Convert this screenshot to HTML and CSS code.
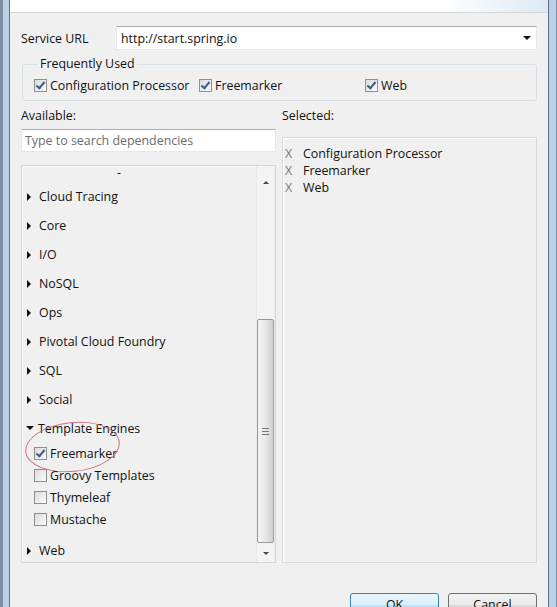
FILE: index.html
```html
<!DOCTYPE html>
<html lang="en">
<head>
  <meta charset="UTF-8" />
  <title>New Spring Starter Project Dependencies</title>
  <link rel="stylesheet" href="styles.css">
</head>
<body>
  <div class="window">
    <div class="banner"></div>
    <div class="content">

      <div class="url-row">
        <label class="url-label">Service URL</label>
        <div class="combo">
          <span>http://start.spring.io</span>
          <span class="combo-arrow"></span>
        </div>
      </div>

      <fieldset class="group">
        <legend>Frequently Used</legend>
        <div class="freq">
          <div class="check"><span class="box checked"></span>Configuration Processor</div>
          <div class="check"><span class="box checked"></span>Freemarker</div>
          <div class="check"><span class="box checked"></span>Web</div>
        </div>
      </fieldset>

      <div class="columns">
        <div class="col">
          <div class="caption">Available:</div>
          <div class="search">Type to search dependencies</div>
          <div class="tree">
            <div class="tree-items">
              <div class="dash">-</div>
              <div class="node"><span class="tri"></span>Cloud Tracing</div>
              <div class="node"><span class="tri"></span>Core</div>
              <div class="node"><span class="tri"></span>I/O</div>
              <div class="node"><span class="tri"></span>NoSQL</div>
              <div class="node"><span class="tri"></span>Ops</div>
              <div class="node"><span class="tri"></span>Pivotal Cloud Foundry</div>
              <div class="node"><span class="tri"></span>SQL</div>
              <div class="node"><span class="tri"></span>Social</div>
              <div class="node open"><span class="tri down"></span>Template Engines</div>
              <div class="leaf marked"><span class="box checked"></span>Freemarker<span class="ring"></span></div>
              <div class="leaf"><span class="box"></span>Groovy Templates</div>
              <div class="leaf"><span class="box"></span>Thymeleaf</div>
              <div class="leaf"><span class="box"></span>Mustache</div>
              <div class="node last"><span class="tri"></span>Web</div>
            </div>
            <div class="scrollbar">
              <div class="sb-btn up"><span class="sb-arrow up"></span></div>
              <div class="sb-track"><div class="sb-thumb"><span class="grip"></span></div></div>
              <div class="sb-btn down"><span class="sb-arrow down"></span></div>
            </div>
          </div>
        </div>

        <div class="col">
          <div class="caption">Selected:</div>
          <div class="selected">
            <div class="sel"><span class="x">X</span>Configuration Processor</div>
            <div class="sel"><span class="x">X</span>Freemarker</div>
            <div class="sel"><span class="x">X</span>Web</div>
          </div>
        </div>
      </div>

      <div class="buttons">
        <button class="btn default">OK</button>
        <button class="btn">Cancel</button>
      </div>
    </div>
  </div>
</body>
</html>
```

FILE: styles.css
```css
html, body {
  margin: 0;
  padding: 0;
  overflow: hidden;
}
body {
  font-family: "Open Sans", "Noto Sans", sans-serif;
  font-size: 12.4px;
  color: #111;
  background: #f0f0f0;
}
.window {
  height: 607px;
  border-left: 3px solid #7d8ea0;
  border-right: 1px solid #7d8ea0;
  box-sizing: border-box;
  position: relative;
  background: #b9d0e6;
  padding: 0 7px 0 6px;
  overflow: hidden;
}
.window::before,
.window::after {
  content: "";
  position: absolute;
  top: 0;
  bottom: 0;
  width: 1px;
  background: #5c7186;
}
.window::before { left: 6px; }
.window::after { right: 7px; }
.banner {
  height: 12px;
  background: linear-gradient(90deg, #fff 0%, #fff 80%, #dce9f5 100%);
  border-bottom: 1px solid #d7d7d7;
  margin-left: 1px;
}
.content {
  height: 594px;
  background: #f0f0f0;
  padding: 13px 12px 0 11px;
  margin-left: 1px;
}

/* service url */
.url-row {
  display: flex;
  align-items: center;
  height: 24px;
}
.url-label {
  width: 95px;
}
.combo {
  flex: 1;
  height: 24px;
  box-sizing: border-box;
  background: #fff;
  border: 1px solid #e3e9ef;
  border-top-color: #abadb3;
  display: flex;
  align-items: center;
  justify-content: space-between;
  padding: 0 5px 0 4px;
}
.combo-arrow {
  width: 0;
  height: 0;
  border-left: 4px solid transparent;
  border-right: 4px solid transparent;
  border-top: 4px solid #111;
}

/* frequently used */
.group {
  margin: 6px 0 0 1px;
  padding: 0 0 6px 11px;
  border: 1px solid #d5dfe5;
  border-radius: 3px;
  height: 45px;
  box-sizing: border-box;
}
.group legend {
  padding: 0 2px;
  margin-left: 4px;
  line-height: 16px;
}
.freq {
  display: grid;
  grid-template-columns: 165px 166px auto;
  margin-top: 5px;
}
.check {
  display: flex;
  align-items: center;
  height: 16px;
}
.box {
  width: 11px;
  height: 11px;
  border: 1px solid #8e8f8f;
  background: linear-gradient(135deg, #dcdcdc, #fbfbfb);
  margin-right: 3px;
  flex: none;
  position: relative;
}
.box.checked::after {
  content: "";
  position: absolute;
  left: 3px;
  top: 0px;
  width: 3px;
  height: 7px;
  border-right: 2px solid #3b5a8c;
  border-bottom: 2px solid #3b5a8c;
  transform: rotate(40deg);
}

/* lists */
.columns {
  display: grid;
  grid-template-columns: 255px 255px;
  gap: 6px;
  margin-top: 7px;
}
.caption {
  height: 15px;
  line-height: 15px;
}
.search {
  margin-top: 6px;
  height: 23px;
  box-sizing: border-box;
  background: #fff;
  border: 1px solid #e3e9ef;
  border-top-color: #abadb3;
  color: #6d6d6d;
  padding: 0 3px;
  line-height: 21px;
}
.tree {
  margin-top: 13px;
  height: 398px;
  box-sizing: border-box;
  border: 1px solid #d4d4d4;
  box-shadow: inset 1px 1px 0 #fff;
  display: flex;
  overflow: hidden;
}
.tree-items {
  flex: 1;
  padding-left: 5px;
  position: relative;
}
.dash {
  height: 16px;
  line-height: 14px;
  padding-left: 90px;
}
.node {
  height: 29px;
  display: flex;
  align-items: center;
}
.node.open {
  height: 28px;
}
.node.last {
  margin-top: 6px;
}
.tri {
  width: 0;
  height: 0;
  border-top: 4px solid transparent;
  border-bottom: 4px solid transparent;
  border-left: 4px solid #111;
  margin: 0 8px 0 0;
}
.tri.down {
  border-left: 4px solid transparent;
  border-right: 4px solid transparent;
  border-top: 4px solid #111;
  border-bottom: 0;
  margin: 0 4px 0 -1px;
}
.leaf {
  height: 22px;
  display: flex;
  align-items: center;
  padding-left: 7px;
  position: relative;
}
.ring {
  position: absolute;
  left: -2px;
  top: -20px;
  width: 93px;
  height: 48px;
  border: 1px solid #d4707e;
  border-radius: 50%;
  transform: rotate(-6deg);
}

/* scrollbar */
.scrollbar {
  width: 17px;
  margin-right: 1px;
  display: flex;
  flex-direction: column;
  border-left: 1px solid #e8e8e8;
  background: #f3f3f3;
}
.sb-btn {
  display: flex;
  align-items: center;
  justify-content: center;
}
.sb-btn.up {
  height: 32px;
}
.sb-btn.down {
  height: 17px;
}
.sb-arrow {
  width: 0;
  height: 0;
  border-left: 3px solid transparent;
  border-right: 3px solid transparent;
}
.sb-arrow.up {
  border-bottom: 3px solid #444;
}
.sb-arrow.down {
  border-top: 3px solid #444;
}
.sb-track {
  flex: 1;
}
.sb-thumb {
  margin-top: 121px;
  height: 224px;
  box-sizing: border-box;
  border: 1px solid #999;
  border-radius: 2px;
  background: linear-gradient(90deg, #f3f3f3, #e8e8ea 50%, #cfcfd3);
  display: flex;
  align-items: center;
  justify-content: center;
}
.grip {
  width: 7px;
  height: 5px;
  border-top: 1px solid #777;
  border-bottom: 1px solid #777;
  position: relative;
}
.grip::after {
  content: "";
  position: absolute;
  left: 0;
  right: 0;
  top: 2px;
  border-top: 1px solid #777;
}

/* selected */
.selected {
  margin-top: 14px;
  height: 426px;
  box-sizing: border-box;
  border: 1px solid #dadada;
  box-shadow: inset 1px 1px 0 #fff;
  padding: 7px 0 0 2px;
}
.sel {
  height: 17px;
  display: flex;
  align-items: center;
}
.x {
  width: 18px;
  color: #7a7a7a;
}

/* buttons */
.buttons {
  display: flex;
  justify-content: flex-end;
  gap: 9px;
  margin-top: 30px;
}
.btn {
  width: 89px;
  height: 23px;
  font: inherit;
  color: #111;
  border: 1px solid #707070;
  border-radius: 3px;
  background: linear-gradient(#f2f2f2, #ebebeb 50%, #dddddd 51%, #cfcfcf);
  padding: 0;
}
.btn.default {
  border-color: #3c7fb1;
  background: linear-gradient(#eaf6fd, #d9f0fc 50%, #bee6fd 51%, #a7d9f5);
}
```
